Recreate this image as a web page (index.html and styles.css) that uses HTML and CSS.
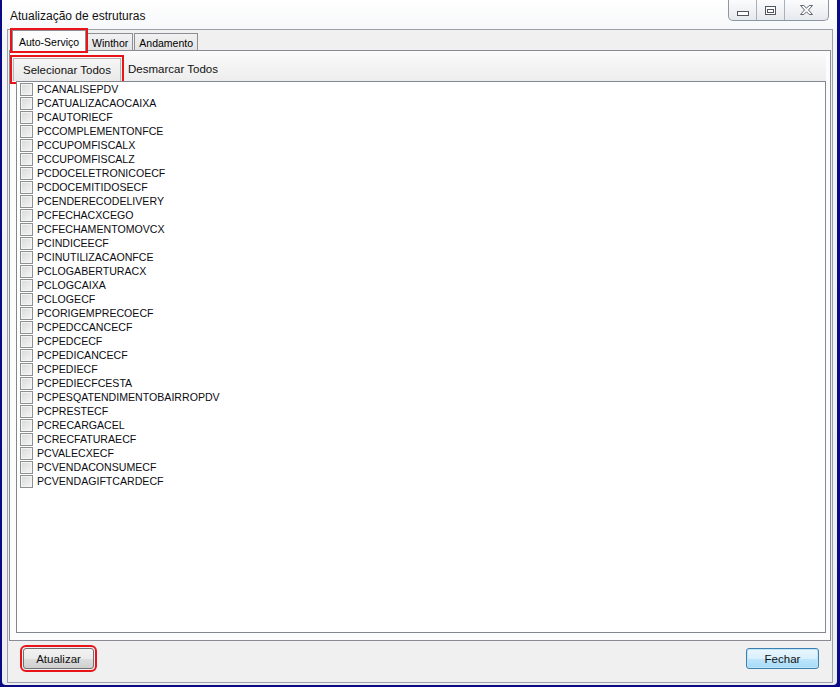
FILE: index.html
```html
<!DOCTYPE html>
<html lang="pt">

<head>
    <meta charset="UTF-8">
    <title>Atualização de estruturas</title>
    <link rel="stylesheet" href="styles.css">
</head>

<body>
    <div class="window">
        <!-- Title bar -->
        <div class="titlebar">
            <span class="title">Atualização de estruturas</span>
            <div class="caption-buttons">
                <div class="cap-btn cap-min">
                    <svg width="12" height="5" viewBox="0 0 12 5"><rect x="0.5" y="0.5" width="11" height="4" fill="#fff" stroke="#4f5661"/></svg>
                </div>
                <div class="cap-btn cap-max">
                    <svg width="11" height="9" viewBox="0 0 11 9"><rect x="0.5" y="0.5" width="10" height="8" fill="#fff" stroke="#4f5661"/><rect x="2.5" y="3.5" width="6" height="3" fill="#fff" stroke="#4f5661"/></svg>
                </div>
                <div class="cap-btn cap-close">
                    <svg width="13" height="10" viewBox="0 0 13 10"><polygon points="0.5,0.5 3.8,0.5 6.5,3.2 9.2,0.5 12.5,0.5 8.5,5 12.5,9.5 9.2,9.5 6.5,6.8 3.8,9.5 0.5,9.5 4.5,5" fill="#fbfbfb" stroke="#5b6470" stroke-linejoin="round"/></svg>
                </div>
            </div>
        </div>

        <div class="client">
            <!-- Tabs -->
            <div class="tabs">
                <div class="tab active marked">Auto-Serviço</div>
                <div class="tab">Winthor</div>
                <div class="tab">Andamento</div>
            </div>

            <div class="panel">
                <div class="toolbar">
                    <div class="tool-btn pressed marked">Selecionar Todos</div>
                    <div class="tool-btn">Desmarcar Todos</div>
                </div>

                <div class="list" id="list"></div>
            </div>

            <div class="footer">
                <button class="btn marked">Atualizar</button>
                <button class="btn default">Fechar</button>
            </div>
        </div>
    </div>

    <script>
        const tables = [
            "PCANALISEPDV", "PCATUALIZACAOCAIXA", "PCAUTORIECF", "PCCOMPLEMENTONFCE",
            "PCCUPOMFISCALX", "PCCUPOMFISCALZ", "PCDOCELETRONICOECF", "PCDOCEMITIDOSECF",
            "PCENDERECODELIVERY", "PCFECHACXCEGO", "PCFECHAMENTOMOVCX", "PCINDICEECF",
            "PCINUTILIZACAONFCE", "PCLOGABERTURACX", "PCLOGCAIXA", "PCLOGECF",
            "PCORIGEMPRECOECF", "PCPEDCCANCECF", "PCPEDCECF", "PCPEDICANCECF",
            "PCPEDIECF", "PCPEDIECFCESTA", "PCPESQATENDIMENTOBAIRROPDV", "PCPRESTECF",
            "PCRECARGACEL", "PCRECFATURAECF", "PCVALECXECF", "PCVENDACONSUMECF",
            "PCVENDAGIFTCARDECF"
        ];

        // Build checkbox rows
        const list = document.getElementById("list");
        tables.forEach(function (name) {
            const row = document.createElement("div");
            row.className = "row";
            row.innerHTML = '<span class="check"></span><span class="label">' + name + '</span>';
            list.appendChild(row);
        });
    </script>
</body>

</html>
```

FILE: styles.css
```css
body {
    margin: 0;
    padding: 0;
    width: 840px;
    height: 687px;
    overflow: hidden;
    background-color: #0a0a84;
    font-family: "Liberation Sans", Arial, sans-serif;
    color: #000;
}

.window {
    height: 685px;
    margin: 0 3px 0 2px;
    display: flex;
    flex-direction: column;
    background: linear-gradient(#ffffff, #f3f5f7 40px, #eceef1);
    border-radius: 0 0 4px 4px;
}

/* Title bar */
.titlebar {
    height: 29px;
    flex: none;
    display: flex;
    justify-content: space-between;
    align-items: flex-start;
}

.title {
    font-size: 12px;
    margin: 9px 0 0 8px;
    color: #111;
    text-shadow: 0 0 6px #fff;
}

.caption-buttons {
    display: flex;
    height: 20px;
    margin-right: 8px;
    border: 1px solid #8d96a3;
    border-top: none;
    border-radius: 0 0 5px 5px;
    overflow: hidden;
    background: linear-gradient(#fcfcfd, #e6e9ed);
}

.cap-btn {
    display: flex;
    align-items: center;
    justify-content: center;
    border-right: 1px solid #a7b0bb;
}

.cap-min {
    width: 27px;
}

.cap-min svg {
    margin-top: 6px;
}

.cap-max {
    width: 27px;
}

.cap-close {
    width: 43px;
    border-right: none;
}

/* Client area */
.client {
    flex: 1;
    margin: 0 4px 2px 5px;
    border: 1px solid #9aa1aa;
    background-color: #f0f0f0;
    display: flex;
    flex-direction: column;
}

.tabs {
    height: 20px;
    flex: none;
    display: flex;
    align-items: flex-end;
    padding: 0 0 0 4px;
}

.tab {
    position: relative;
    height: 17px;
    padding: 0 4px;
    margin-right: 1px;
    border: 1px solid #8c8e94;
    border-bottom: none;
    background: linear-gradient(#f2f2f2, #e4e4e4);
    font-size: 10.5px;
    line-height: 18px;
    box-sizing: border-box;
}

.tab.active {
    height: 21px;
    margin-bottom: -1px;
    padding: 2px 6px 0;
    background: #fcfcfc;
    z-index: 1;
}

.panel {
    flex: 1;
    margin: 0 1px 0 1px;
    border: 1px solid #898c95;
    background-color: #fcfcfc;
    display: flex;
    flex-direction: column;
    padding: 0 4px 7px 0;
}

.toolbar {
    height: 30px;
    flex: none;
    display: flex;
    align-items: flex-end;
    padding-left: 3px;
    background: linear-gradient(#fbfbfb, #ededed);
}

.tool-btn {
    height: 23px;
    padding: 0 7px;
    font-size: 11.5px;
    line-height: 22px;
    color: #111;
    box-sizing: border-box;
}

.tool-btn.pressed {
    padding: 0 9px;
    border: 1px solid #b7b7b7;
    border-bottom: none;
    background: linear-gradient(#f6f6f6, #e9e9e9);
}

.list {
    flex: 1;
    margin-left: 6px;
    border: 1px solid #828790;
    background-color: #fff;
    padding: 0 3px;
}

.row {
    height: 14px;
    display: flex;
    align-items: center;
    font-size: 10.6px;
    color: #0b0b12;
}

.check {
    width: 13px;
    height: 13px;
    flex: none;
    box-sizing: border-box;
    border: 1px solid #8e8f8f;
    background: linear-gradient(135deg, #d8d8d8, #f6f6f6);
    box-shadow: inset 0 0 0 1px #f4f4f4;
    margin-right: 4px;
}

/* Bottom buttons */
.footer {
    height: 41px;
    flex: none;
    display: flex;
    justify-content: space-between;
    align-items: flex-start;
    padding: 7px 13px 0 15px;
    box-sizing: border-box;
}

.btn {
    width: 71px;
    height: 21px;
    padding: 0;
    border: 1px solid #707070;
    border-radius: 3px;
    background: linear-gradient(#f2f2f2, #ebebeb 50%, #dddddd 51%, #cfcfcf);
    font-family: "Liberation Sans", Arial, sans-serif;
    font-size: 11.5px;
    color: #111;
}

.btn.default {
    width: 73px;
    border-color: #3c7fb1;
    box-shadow: inset 0 0 0 1px #bfe6f7;
    background: linear-gradient(#eaf6fd, #d9f0fc 50%, #bee6fd 51%, #a7d9f5);
}

/* Red highlight annotations */
.marked {
    outline: 2px solid #e8141a;
    outline-offset: 0;
}

.tool-btn.marked {
    outline-offset: 1px;
}

.btn.marked {
    outline-offset: 1px;
}
```
